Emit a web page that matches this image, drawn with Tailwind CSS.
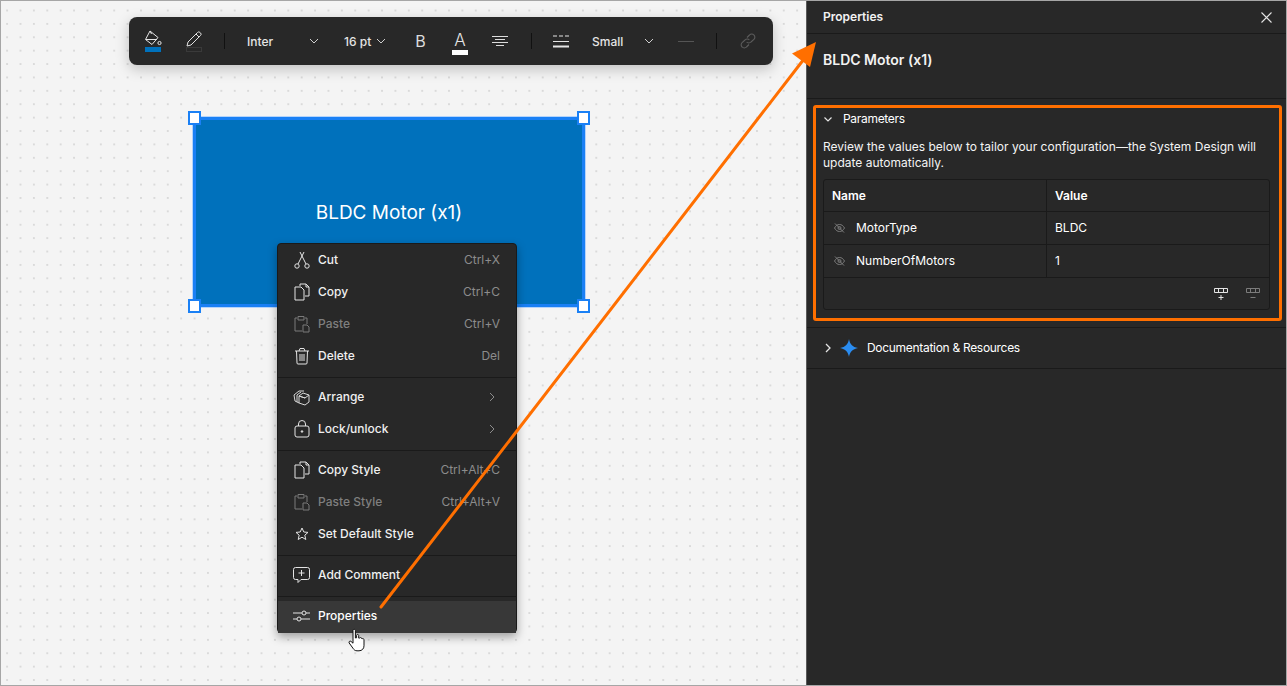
<!doctype html>
<html><head><meta charset="utf-8">
<script src="https://cdn.jsdelivr.net/npm/@tailwindcss/browser@4"></script>
</head>
<body class="m-0 overflow-hidden bg-[#f4f4f4]">
<div class="relative flex w-[1287px] h-[686px] overflow-hidden font-['Inter','Noto_Sans',sans-serif] border border-[#a6a6a6]">

  <!-- canvas -->
  <div class="relative w-[805px] h-full shrink-0 bg-[#f4f4f4] bg-[radial-gradient(circle,#adadad_0.55px,transparent_0.75px)] bg-size-[13.4px_13.4px] bg-position-[-0.6px_2.8px]">

    <!-- toolbar -->
    <div class="absolute left-[128px] top-[16px] w-[644px] h-[48px] rounded-lg bg-[#282828] shadow-[0_4px_14px_rgba(0,0,0,0.22)] flex items-center pl-[4px] text-[#e4e4e4] text-[12px] font-medium">
      <div class="w-[40px] flex flex-col items-center">
        <svg class="w-[18px] h-[18px]" viewBox="0 0 18 18" fill="none" stroke="#e6e6e6" stroke-width="1"><path d="M6 1l8 6.500-6 7L1.500 9.500z"/><path d="M2 9.500h11"/><path d="M6 1l1.500 3"/><circle cx="15.500" cy="13" r="1.600"/></svg>
        <div class="w-[16px] h-[5px] bg-[#0071bc] mt-[-1px]"></div>
      </div>
      <div class="w-[42px] flex flex-col items-center">
        <svg class="w-[18px] h-[18px]" viewBox="0 0 18 18" fill="none" stroke="#e0e0e0" stroke-width="1"><path d="M2 16l1-4L12.500 2.500a1.800 1.800 0 012.600 0l.4.4a1.800 1.800 0 010 2.600L6 15z"/><path d="M11 4l3 3"/></svg>
        <div class="w-[16px] h-[5px] border border-[#3a3a3a] mt-[-1px]"></div>
      </div>
      <div class="w-px h-[16px] bg-[#111] ml-[9px]"></div>
      <span class="ml-[22px] w-[60px] pt-[1px]">Inter</span>
      <svg class="w-[10px] h-[6px] ml-[2px]" viewBox="0 0 10 6" fill="none" stroke="#cfcfcf"><path d="M1 1l4 4 4-4"/></svg>
      <span class="ml-[25px] text-[12px] w-[32px] whitespace-nowrap pt-[1px]">16 pt</span>
      <svg class="w-[10px] h-[6px]" viewBox="0 0 10 6" fill="none" stroke="#cfcfcf"><path d="M1 1l4 4 4-4"/></svg>
      <div class="w-[39px] ml-[26px] text-center text-[16px] font-normal text-[#dcdcdc]"><span class="relative left-[-11px]">B</span></div>
      <div class="w-[16px] ml-[1px] flex flex-col items-center">
        <span class="text-[17px] leading-[17px] font-light text-[#e4e4e4] mt-[4px]">A</span>
        <div class="w-[16px] h-[5px] bg-white mt-[1px]"></div>
      </div>
      <svg class="w-[18px] h-[12px] ml-[23px]" viewBox="0 0 18 12" stroke="#dcdcdc"><path d="M1 1.500h16M4 4.500h10M1 7.500h16M5 10.500h8"/></svg>
      <div class="w-px h-[16px] bg-[#111] ml-[22px]"></div>
      <svg class="w-[18px] h-[13px] ml-[20px]" viewBox="0 0 18 13" stroke="#e4e4e4"><path d="M1 1h4M7 1h4M13 1h4" /><path d="M1 6.500h16"/><path d="M1 11.500h16" stroke-width="2"/></svg>
      <span class="ml-[22px] w-[46px] text-[12px] pt-[1px]">Small</span>
      <svg class="w-[10px] h-[6px] ml-[6px]" viewBox="0 0 10 6" fill="none" stroke="#cfcfcf"><path d="M1 1l4 4 4-4"/></svg>
      <div class="w-[16px] h-px bg-[#555] ml-[24px]"></div>
      <div class="w-px h-[16px] bg-[#111] ml-[22px]"></div>
      <svg class="w-[18px] h-[18px] ml-[22px]" viewBox="0 0 18 18" fill="none" stroke="#5c5c5c" stroke-width="1.100"><path d="M8 5.500l2.500-2.500a3 3 0 014.400 0 3 3 0 010 4.400L12 10a3 3 0 01-4.400 0"/><path d="M10 12.500L7.500 15a3 3 0 01-4.400 0 3 3 0 010-4.400L6 8a3 3 0 014.400 0"/></svg>
    </div>

    <!-- selected block -->
    <div class="absolute left-[192px] top-[116px] w-[392px] h-[190px] bg-[#0071bc] border-[3px] border-[#1a80f5] outline outline-[#b5d4fa] flex items-center justify-center">
      <span class="text-white text-[19px] pt-[2px]">BLDC Motor (x1)</span>
      <div class="absolute left-[-8px] top-[-9px] w-[13px] h-[14px] bg-white border-2 border-[#1a80f5]"></div>
      <div class="absolute right-[-8px] top-[-9px] w-[13px] h-[14px] bg-white border-2 border-[#1a80f5]"></div>
      <div class="absolute left-[-8px] bottom-[-9px] w-[13px] h-[14px] bg-white border-2 border-[#1a80f5]"></div>
      <div class="absolute right-[-8px] bottom-[-9px] w-[13px] h-[14px] bg-white border-2 border-[#1a80f5]"></div>
    </div>

    <!-- context menu -->
    <div class="absolute left-[276px] top-[242px] w-[240px] h-[390px] rounded-[4px] bg-[#282828] border border-[#1a1a1a] shadow-[0_4px_10px_rgba(0,0,0,0.35)] text-[12px] font-medium text-[#f0f0f0]">
      <div class="flex items-center h-[32px] pl-[16px] pr-[16px]">
        <svg class="w-[16px] h-[18px] mr-[8px]" viewBox="0 0 16 18" fill="none" stroke="#e4e4e4"><circle cx="3" cy="15" r="2.200"/><circle cx="13" cy="15" r="2.200"/><path d="M4 13L10 1M12 13L6 1"/></svg><span>Cut</span><span class="ml-auto font-normal text-[#8c8c8c]">Ctrl+X</span>
      </div>
      <div class="flex items-center h-[32px] pl-[16px] pr-[16px]">
        <svg class="w-[16px] h-[18px] mr-[8px]" viewBox="0 0 16 18" fill="none" stroke="#e4e4e4"><path d="M6 3V1h6l3 3v9h-4"/><path d="M1 4h6l3 3v10H1z"/><path d="M12 1v3h3"/></svg><span>Copy</span><span class="ml-auto font-normal text-[#8c8c8c]">Ctrl+C</span>
      </div>
      <div class="flex items-center h-[32px] pl-[16px] pr-[16px] text-[#7f7f7f]">
        <svg class="w-[16px] h-[18px] mr-[8px]" viewBox="0 0 16 18" fill="none" stroke="#7a7a7a"><path d="M8 16H1V3h2M11 3h2v6"/><path d="M4 1.500h6V5H4z"/><path d="M9 10h4l2 2v5H9z"/></svg><span>Paste</span><span class="ml-auto font-normal text-[#8c8c8c]">Ctrl+V</span>
      </div>
      <div class="flex items-center h-[32px] pl-[16px] pr-[16px]">
        <svg class="w-[16px] h-[18px] mr-[8px]" viewBox="0 0 16 18" fill="none" stroke="#e4e4e4"><path d="M1 4h14M5 4l1-2.500h4L11 4M2.500 4l.5 12a1 1 0 001 1h8a1 1 0 001-1l.5-12M6 7v7M8 7v7M10 7v7"/></svg><span>Delete</span><span class="ml-auto font-normal text-[#8c8c8c]">Del</span>
      </div>
      <div class="h-px bg-[#1a1a1a] mt-[5px] mb-[3px]"></div>
      <div class="flex items-center h-[32px] pl-[15px] pr-[21px]">
        <svg class="w-[17px] h-[18px] mr-[8px]" viewBox="0 0 17 18" fill="none" stroke="#d8d8d8"><path d="M6 8v7l6 2 4-3V7l-4 3z"/><path d="M6 8l4-3 6 2M6 8l6 2"/><path d="M6 15l-2-1V7l4-3"/><path d="M4 14l-2-1-1-6 5-4h5"/></svg><span>Arrange</span>
        <svg class="ml-auto w-[6px] h-[10px]" viewBox="0 0 6 10" fill="none" stroke="#8c8c8c"><path d="M1 1l4 4-4 4"/></svg>
      </div>
      <div class="flex items-center h-[32px] pl-[16px] pr-[21px]">
        <svg class="w-[16px] h-[18px] mr-[8px]" viewBox="0 0 16 18" fill="none" stroke="#e4e4e4"><rect x="1" y="6" width="14" height="11" rx="2"/><path d="M4.500 6V4a3.500 3.500 0 017 0v2"/><circle cx="8" cy="11.500" r="0.800" fill="#e4e4e4"/></svg><span>Lock/unlock</span>
        <svg class="ml-auto w-[6px] h-[10px]" viewBox="0 0 6 10" fill="none" stroke="#8c8c8c"><path d="M1 1l4 4-4 4"/></svg>
      </div>
      <div class="h-px bg-[#1a1a1a] mt-[5px] mb-[3px]"></div>
      <div class="flex items-center h-[32px] pl-[16px] pr-[16px]">
        <svg class="w-[16px] h-[18px] mr-[8px]" viewBox="0 0 16 18" fill="none" stroke="#e4e4e4"><path d="M6 3V1h6l3 3v9h-4"/><path d="M1 4h6l3 3v10H1z"/><path d="M12 1v3h3"/></svg><span>Copy Style</span><span class="ml-auto font-normal text-[#8c8c8c]">Ctrl+Alt+C</span>
      </div>
      <div class="flex items-center h-[32px] pl-[16px] pr-[16px] text-[#7f7f7f]">
        <svg class="w-[16px] h-[18px] mr-[8px]" viewBox="0 0 16 18" fill="none" stroke="#7a7a7a"><path d="M8 16H1V3h2M11 3h2v6"/><path d="M4 1.500h6V5H4z"/><path d="M9 10h4l2 2v5H9z"/></svg><span>Paste Style</span><span class="ml-auto font-normal text-[#8c8c8c]">Ctrl+Alt+V</span>
      </div>
      <div class="flex items-center h-[32px] pl-[16px] pr-[16px]">
        <svg class="w-[16px] h-[16px] mr-[8px]" viewBox="0 0 16 16" fill="none" stroke="#e4e4e4"><path d="M8 2l1.800 4 4.200.4-3.200 2.800 1 4.300L8 11.200l-3.800 2.300 1-4.300L2 6.400 6.200 6z"/></svg><span>Set Default Style</span>
      </div>
      <div class="h-px bg-[#1a1a1a] mt-[5px] mb-[3px]"></div>
      <div class="flex items-center h-[32px] pl-[15px] pr-[16px]">
        <svg class="w-[17px] h-[18px] mr-[8px]" viewBox="0 0 17 18" fill="none" stroke="#e4e4e4"><path d="M2.500 1.500h12a2 2 0 012 2v8a2 2 0 01-2 2H8l-3 3v-3H2.500a2 2 0 01-2-2v-8a2 2 0 012-2z"/><path d="M8.500 4v6M5.500 7h6"/></svg><span>Add Comment</span>
      </div>
      <div class="h-px bg-[#1a1a1a] mt-[5px]"></div>
      <div class="flex items-center h-[32px] mt-[4px] pb-[2px] pl-[15px] pr-[16px] bg-[#383838] text-white">
        <svg class="w-[17px] h-[12px] mr-[8px]" viewBox="0 0 17 12" fill="none" stroke="#e4e4e4"><path d="M0 3h9M13 3h4M0 9h4M8 9h9"/><circle cx="11" cy="3" r="2"/><circle cx="6" cy="9" r="2"/></svg><span>Properties</span>
      </div>
    </div>

    <!-- hand cursor -->
    <svg class="absolute left-[347px] top-[627px] w-[18px] h-[24px]" viewBox="0 0 18 24" fill="#fff" stroke="#111" stroke-width="1"><path d="M5 2.500a1.200 1.200 0 012.400 0V10l1.200-.2V7.500c0-1.400 2-1.400 2.100 0v2.600l1-.1c1-.9 2-.4 2 .6l.3.2c1-.6 2 0 2 1v6c0 2.800-2 5-5 5H9c-2 0-3-1-4-2.500L1.200 15c-.8-1.200.7-2.600 1.800-1.600l2 1.800z"/></svg>
  </div>

  <!-- right panel -->
  <div class="flex-1 h-full bg-[#282828] border-l border-[#5a5a5a] text-white text-[12px]">
    <div class="flex items-center justify-between h-[33px] border-b border-[#1a1a1a] pl-[16px] pr-[16px]">
      <span class="font-semibold text-[#f2f2f2]">Properties</span>
      <svg class="w-[11px] h-[11px]" viewBox="0 0 11 11" stroke="#e4e4e4" stroke-width="1.100"><path d="M0.500 0.500l10 10M10.500 0.500l-10 10"/></svg>
    </div>
    <div class="h-[65px] border-b border-[#1a1a1a] pl-[16px] pt-[17px]">
      <span class="text-[14px] font-semibold leading-[17px] block text-[#f2f2f2]">BLDC Motor (x1)</span>
    </div>
    <div class="mx-[6px] mt-[6px] w-[469px] h-[216px] rounded-[3px] border-[3px] border-[#ff6f00] pl-[7px] pr-[8px]">
      <div class="flex items-center h-[22px]">
        <svg class="w-[8px] h-[5px] ml-[1px]" viewBox="0 0 8 5" fill="none" stroke="#e4e4e4" stroke-width="1.200"><path d="M0.500 0.500l3.500 3.500 3.500-3.500"/></svg>
        <span class="ml-[11px] tracking-[-0.3px]">Parameters</span>
      </div>
      <p class="mt-[9px] leading-[16px] text-[#f4f4f4] whitespace-nowrap">Review the values below to tailor your configuration—the System Design will<br>update automatically.</p>
      <div class="mt-[8px] w-[447px] h-[131px] rounded-[3px] border border-[#1a1a1a]">
        <div class="flex h-[32px] border-b border-[#1a1a1a] font-semibold">
          <div class="w-[223px] border-r border-[#1a1a1a] pl-[8px] flex items-center">Name</div>
          <div class="pl-[8px] flex items-center">Value</div>
        </div>
        <div class="flex h-[33px] border-b border-[#1a1a1a]">
          <div class="w-[223px] border-r border-[#1a1a1a] pl-[10px] flex items-center">
            <svg class="w-[11px] h-[10px]" viewBox="0 0 11 10" fill="none" stroke="#7c7c7c"><path d="M0.500 5C2 2.500 3.500 1.500 5.500 1.500S9 2.500 10.500 5C9 7.500 7.500 8.500 5.500 8.500S2 7.500 0.500 5z"/><circle cx="5.500" cy="5" r="1.500"/><path d="M1 0.500l9 9"/></svg>
            <span class="ml-[11px]">MotorType</span>
          </div>
          <div class="pl-[8px] flex items-center">BLDC</div>
        </div>
        <div class="flex h-[33px] border-b border-[#1a1a1a]">
          <div class="w-[223px] border-r border-[#1a1a1a] pl-[10px] flex items-center">
            <svg class="w-[11px] h-[10px]" viewBox="0 0 11 10" fill="none" stroke="#7c7c7c"><path d="M0.500 5C2 2.500 3.500 1.500 5.500 1.500S9 2.500 10.500 5C9 7.500 7.500 8.500 5.500 8.500S2 7.500 0.500 5z"/><circle cx="5.500" cy="5" r="1.500"/><path d="M1 0.500l9 9"/></svg>
            <span class="ml-[11px]">NumberOfMotors</span>
          </div>
          <div class="pl-[8px] flex items-center">1</div>
        </div>
        <div class="flex items-center justify-end h-[31px] pr-[9px] gap-[18px]">
          <svg class="w-[14px] h-[14px]" viewBox="0 0 14 14" fill="none" stroke="#e4e4e4"><path d="M0.500 1.500h13v4h-13zM4.500 1.500v4M9.500 1.500v4"/><path d="M7 8v5M4.500 10.500h5"/></svg>
          <svg class="w-[14px] h-[14px]" viewBox="0 0 14 14" fill="none" stroke="#7c7c7c"><path d="M0.500 1.500h13v4h-13zM4.500 1.500v4M9.500 1.500v4"/><path d="M4.500 10.500h5"/></svg>
        </div>
      </div>
    </div>
    <div class="mt-[6px] h-[42px] border-y border-[#1a1a1a] flex items-center pl-[18px]">
      <svg class="w-[6px] h-[10px]" viewBox="0 0 6 10" fill="none" stroke="#e4e4e4" stroke-width="1.300"><path d="M1 1l4 4-4 4"/></svg>
      <svg class="w-[18px] h-[18px] ml-[9px]" viewBox="0 0 18 18"><path d="M9 0c.8 5 3.500 8 9 9-5.500 1-8.200 4-9 9-.8-5-3.500-8-9-9 5.500-1 8.200-4 9-9z" fill="#2a8cf0"/></svg>
      <span class="ml-[9px] tracking-[-0.3px]">Documentation &amp; Resources</span>
    </div>
  </div>

  <!-- annotation arrow -->
  <svg class="absolute left-[-1px] top-[-1px] w-[1287px] h-[686px] pointer-events-none" viewBox="0 0 1287 686" fill="none">
    <path d="M381 607L804 59" stroke="#ff6f00" stroke-width="3" stroke-linecap="round"/>
    <path d="M792 53.500L816 42L810 67z" fill="#ff6f00"/>
  </svg>
</div>
</body></html>
